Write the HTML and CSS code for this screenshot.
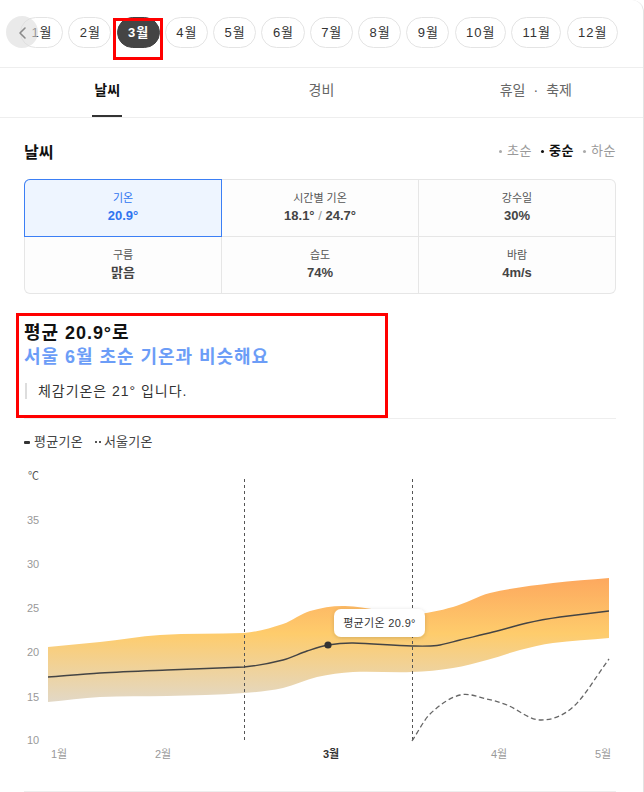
FILE: index.html
```html
<!DOCTYPE html>
<html lang="ko">
<head>
<meta charset="utf-8">
<title>날씨</title>
<link rel="stylesheet" href="styles.css">
</head>
<body>
<div class="page">
  <div class="months">
    <div class="month-list">
      <span class="pill">1월</span>
      <span class="pill">2월</span>
      <span class="pill active">3월</span>
      <span class="pill">4월</span>
      <span class="pill">5월</span>
      <span class="pill">6월</span>
      <span class="pill">7월</span>
      <span class="pill">8월</span>
      <span class="pill">9월</span>
      <span class="pill">10월</span>
      <span class="pill">11월</span>
      <span class="pill">12월</span>
    </div>
    <button class="prev" aria-label="이전">
      <svg width="32" height="32" viewBox="0 0 32 32"><polyline points="19,12 14,17 19,22" fill="none" stroke="#8a8a8a" stroke-width="1.6" stroke-linecap="round" stroke-linejoin="round"/></svg>
    </button>
    <div class="mark-month"></div>
  </div>

  <nav class="tabs">
    <div class="tab"><span class="active">날씨</span></div>
    <div class="tab"><span>경비</span></div>
    <div class="tab"><span>휴일<i class="sep">·</i>축제</span></div>
  </nav>

  <section class="weather">
    <div class="weather-head">
      <h2>날씨</h2>
      <ul class="periods">
        <li>초순</li>
        <li class="on">중순</li>
        <li>하순</li>
      </ul>
    </div>

    <div class="stats">
      <div class="cell sel c-tl"><div class="label">기온</div><div class="value">20.9°</div></div>
      <div class="cell"><div class="label">시간별 기온</div><div class="value">18.1° <span class="slash">/</span> 24.7°</div></div>
      <div class="cell c-tr"><div class="label">강수일</div><div class="value">30%</div></div>
      <div class="cell c-bl"><div class="label">구름</div><div class="value">맑음</div></div>
      <div class="cell"><div class="label">습도</div><div class="value">74%</div></div>
      <div class="cell c-br"><div class="label">바람</div><div class="value">4m/s</div></div>
    </div>

    <div class="summary">
      <h3>평균 20.9°로</h3>
      <h3 class="sub">서울 6월 초순 기온과 비슷해요</h3>
      <p class="feel">체감기온은 21° 입니다.</p>
    </div>

    <div class="legend">
      <span class="sw sw-solid"></span><span class="lg-text">평균기온</span>
      <span class="sw sw-dot"></span><span class="lg-text">서울기온</span>
    </div>

    <svg class="chart" width="592" height="320" viewBox="24 460 592 320">
      <defs>
        <linearGradient id="band" gradientUnits="userSpaceOnUse" x1="0" y1="578" x2="0" y2="702">
          <stop offset="0" stop-color="#fda85e"/>
          <stop offset="0.45" stop-color="#fecc6c"/>
          <stop offset="1" stop-color="#e2d8c6"/>
        </linearGradient>
        <filter id="shadow" x="-20%" y="-40%" width="140%" height="180%">
          <feDropShadow dx="0" dy="1" stdDeviation="2" flood-color="#000" flood-opacity="0.16"/>
        </filter>
      </defs>
      <g class="axis">
        <text x="28" y="480" class="unit">℃</text>
        <text x="27" y="524">35</text>
        <text x="27" y="568">30</text>
        <text x="27" y="612">25</text>
        <text x="27" y="656">20</text>
        <text x="27" y="701">15</text>
        <text x="27" y="744">10</text>
      </g>
      <path fill="url(#band)" d="M48,647 C65.3,645.3 82.7,643.9 100,642 C120,639.9 140,636.3 160,635 C188,633.3 216,634 244,633 C257,631.8 270,628.3 283,624 C292,621 301,613.6 310,611 C321.7,607.6 333.3,605.7 345,606 C367.3,606.6 389.7,613.8 412,614 C425.7,614.1 439.3,610.7 453,607 C465.3,603.7 477.7,596 490,593 C511,588 532,585.6 553,583 C571.7,580.6 590.3,579.7 609,578 L609,638 C590.3,639.7 571.7,640.5 553,643 C542,644.5 531,647.1 520,650 C509,652.9 498,657 487,660 C475.7,663 464.3,666.2 453,668 C439.3,670.2 425.7,671.5 412,672 C392.3,672.8 372.7,671 353,672 C341,672.6 329,674.3 317,677 C305.7,679.6 294.3,685.5 283,688 C270,690.9 257,692.1 244,693 C218.3,694.8 192.7,695.3 167,696 C144.7,696.6 122.3,695.9 100,697 C82.7,697.9 65.3,700.3 48,702 Z"/>
      <line x1="244.5" y1="479" x2="244.5" y2="742" class="guide"/>
      <line x1="412.5" y1="479" x2="412.5" y2="742" class="guide"/>
      <path class="mean" d="M48,677 C65.3,675.7 82.7,674 100,673 C122.3,671.7 144.7,670.9 167,670 C192.7,668.9 218.3,668 244,667 C257,665.9 270,663.3 283,660 C291,658 299,653.7 307,651 C314,648.7 321,646.2 328,645 C336.3,643.6 344.7,642.9 353,643 C372.7,643.6 392.3,645.4 412,646 C420.3,646.2 428.7,646.5 437,645.5 C444.7,644.5 452.3,641.9 460,640 C471,637.3 482,634.8 493,632 C504.3,629.5 515.7,625.5 527,623 C538,620.5 549,618.6 560,617 C576.3,615 592.7,613 609,611"/>
      <path class="seoul" d="M412,741 C418,732 424,719.8 430,714 C440,704.4 450,697.6 460,695 C469,692.7 478,697.1 487,699 C493.7,700.4 500.3,702.3 507,705 C518,709.4 529,719.7 540,720 C551,720.3 562,716.7 573,707 C585,696.4 597,675 609,659"/>
      <circle cx="328" cy="645" r="3.6" fill="#333"/>
      <rect x="334" y="609" width="91" height="28" rx="7" fill="#fff" filter="url(#shadow)"/>
      <text x="379.5" y="627" class="tip">평균기온 20.9°</text>
      <g class="xaxis">
        <text x="59" y="758">1월</text>
        <text x="163" y="758">2월</text>
        <text x="331" y="758" class="cur">3월</text>
        <text x="499" y="758">4월</text>
        <text x="603" y="758">5월</text>
      </g>
    </svg>
    <div class="bottom-line"></div>
  </section>
</div>
</body>
</html>
```

FILE: styles.css
```css
*,
*::before,
*::after {
  box-sizing: border-box;
  margin: 0;
  padding: 0;
}

body {
  font-family: "Liberation Sans", "Noto Sans CJK KR", sans-serif;
  letter-spacing: 0.06em;
  color: #222;
  background: #fff;
}

.page {
  width: 644px;
  min-height: 792px;
  border-right: 1px solid #e3e3e3;
  border-top-right-radius: 12px;
  overflow: hidden;
  background: #fff;
}

/* month selector */
.months {
  position: relative;
  height: 68px;
  border-bottom: 1px solid #eeeeee;
  padding: 17px 0 0 20px;
}

.month-list {
  display: flex;
  gap: 5.2px;
  white-space: nowrap;
}

.pill {
  flex: none;
  height: 31px;
  line-height: 29px;
  padding: 0 9.6px 0 10.4px;
  border: 1px solid #e4e4e4;
  border-radius: 16px;
  font-size: 13px;
  color: #333;
}

.pill.active {
  background: #444;
  border-color: #444;
  color: #fff;
  font-weight: 700;
}

.prev {
  position: absolute;
  left: 6px;
  top: 16px;
  width: 32px;
  height: 32px;
  border: 0;
  border-radius: 50%;
  background: rgba(220, 220, 220, 0.6);
  display: block;
}

.prev svg {
  display: block;
}

.mark-month {
  position: absolute;
  left: 113px;
  top: 18px;
  width: 50px;
  height: 42px;
  border: 3px solid #ff0000;
}

/* tabs */
.tabs {
  display: flex;
  height: 50px;
  border-bottom: 1px solid #eeeeee;
}

.tab {
  flex: 1;
  display: flex;
  justify-content: center;
}

.tab span {
  position: relative;
  display: block;
  height: 49px;
  line-height: 45px;
  padding: 0 1px;
  font-size: 14px;
  letter-spacing: 0;
  color: #666;
}

.tab .sep {
  font-style: normal;
  margin: 0 8px;
}

.tab span.active {
  color: #111;
  font-weight: 700;
}

.tab span.active::after {
  content: "";
  position: absolute;
  left: -1px;
  right: -1px;
  bottom: 0;
  height: 2px;
  background: #333;
}

/* weather section */
.weather {
  padding: 0 27px 0 24px;
}

.weather-head {
  display: flex;
  justify-content: space-between;
  align-items: center;
  margin-top: 24px;
  height: 22px;
}

.weather-head h2 {
  font-size: 16px;
  line-height: 22px;
  font-weight: 700;
  letter-spacing: 0;
  color: #111;
}

.periods {
  display: flex;
  gap: 9px;
  list-style: none;
  font-size: 13px;
  line-height: 18px;
  letter-spacing: 0.04em;
  color: #9a9a9a;
  margin-top: -4px;
}

.periods li {
  display: flex;
  align-items: center;
}

.periods li::before {
  content: "";
  width: 3px;
  height: 3px;
  border-radius: 50%;
  background: #aaa;
  margin-right: 5px;
}

.periods li.on {
  color: #111;
  font-weight: 700;
}

.periods li.on::before {
  background: #111;
}

.stats {
  margin-top: 15px;
  display: grid;
  grid-template-columns: repeat(3, 1fr);
  gap: 1px;
  padding: 1px;
  background: #e6e6e6;
  border-radius: 6px;
  letter-spacing: 0;
}

.cell {
  background: #fdfdfd;
  height: 56px;
  padding-top: 10px;
  text-align: center;
}

.c-tl { border-top-left-radius: 5px; }
.c-tr { border-top-right-radius: 5px; }
.c-bl { border-bottom-left-radius: 5px; }
.c-br { border-bottom-right-radius: 5px; }

.cell .label {
  font-size: 11px;
  line-height: 16px;
  color: #555;
}

.cell .value {
  font-size: 13px;
  line-height: 20px;
  font-weight: 700;
  color: #444;
}

.cell .slash {
  font-weight: 400;
  color: #999;
}

.cell.sel {
  position: relative;
  z-index: 1;
  background: #eef5ff;
  box-shadow: 0 0 0 1px #3b7ff5;
}

.cell.sel .label,
.cell.sel .value {
  color: #2f74f0;
}

.summary {
  position: relative;
  margin-top: 27px;
  padding-bottom: 17px;
  border-bottom: 1px solid #eeeeee;
}

.summary::after {
  content: "";
  position: absolute;
  left: -8px;
  top: -8px;
  width: 372px;
  height: 105px;
  border: 3px solid #ff0000;
}

.summary h3 {
  font-size: 18px;
  line-height: 24px;
  font-weight: 700;
  color: #111;
}

.summary h3.sub {
  color: #6c9df7;
}

.feel {
  display: flex;
  align-items: center;
  margin-top: 12px;
  font-size: 14px;
  line-height: 20px;
  color: #333;
}

.feel::before {
  content: "";
  width: 2px;
  height: 16px;
  margin-left: 1px;
  margin-right: 11px;
  background: #dddddd;
}

.legend {
  display: flex;
  align-items: center;
  margin-top: 14px;
  height: 18px;
  font-size: 13px;
  line-height: 18px;
  letter-spacing: 0.02em;
  color: #444;
}

.sw {
  display: block;
  width: 6px;
  margin-right: 4px;
}

.sw-solid {
  height: 3px;
  border-radius: 1px;
  background: #333;
}

.sw-dot {
  height: 2px;
  margin-left: 12px;
  margin-right: 3px;
  background: linear-gradient(90deg, #555 0 2px, transparent 2px 4px, #555 4px 6px);
}

.chart {
  display: block;
  margin-top: 9px;
  font-family: "Liberation Sans", "Noto Sans CJK KR", sans-serif;
  letter-spacing: 0;
}

.axis text {
  font-size: 11px;
  fill: #999;
}

.axis text.unit {
  fill: #555;
}

.xaxis text {
  font-size: 11px;
  fill: #999;
  text-anchor: middle;
}

.xaxis text.cur {
  fill: #333;
  font-weight: 700;
}

.guide {
  stroke: #555;
  stroke-width: 1;
  stroke-dasharray: 3 3;
}

.mean {
  fill: none;
  stroke: #444;
  stroke-width: 1.4;
}

.seoul {
  fill: none;
  stroke: #666;
  stroke-width: 1.3;
  stroke-dasharray: 5 3;
}

.tip {
  font-size: 11px;
  fill: #333;
  text-anchor: middle;
  letter-spacing: 0.03em;
}

.bottom-line {
  margin-top: 11px;
  height: 1px;
  background: #eeeeee;
}
```
